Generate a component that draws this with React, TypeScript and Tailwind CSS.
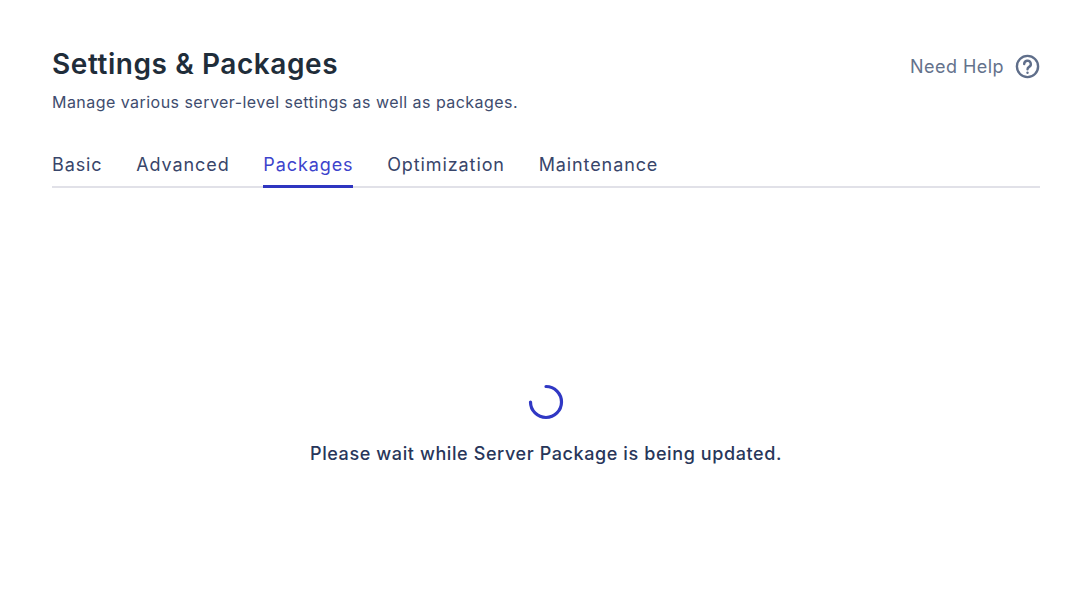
const tabs = ['Basic', 'Advanced', 'Packages', 'Optimization', 'Maintenance'];

export default function App() {
  return (
    <div className="min-h-[602px] bg-white pl-[52px] pr-[32px] pt-[45px] font-['Inter',sans-serif]">
      <div className="flex justify-between">
        <div>
          <h1 className="text-[28px] leading-[38px] font-semibold tracking-[0.57px] text-[#1f2d3a]">Settings &amp; Packages</h1>
          <p className="mt-[8px] text-[16px] leading-[22px] tracking-[0.46px] text-[#3e4c6e]">Manage various server-level settings as well as packages.</p>
        </div>
        <div className="-mt-[1px] flex h-[44px] items-center gap-[11px]">
          <span className="text-[18px] tracking-[0.45px] text-[#64728c]">Need Help</span>
          <svg width="25" height="25" viewBox="0 0 25 25" fill="none" stroke="#5f6e8a" strokeWidth="2.4" strokeLinecap="round">
            <circle cx="12.5" cy="12.5" r="10.6" />
            <path d="M9.2 10a3.3 3.3 0 1 1 4.9 2.9c-1 .6-1.6 1.2-1.6 2.3" />
            <path d="M12.5 18.6v.1" />
          </svg>
        </div>
      </div>

      <div className="mt-[36px] flex gap-[33.75px] border-b-2 border-[#e1e1e8]">
        {tabs.map((tab) => (
          <div
            key={tab}
            className={
              tab === 'Packages'
                ? "-mb-[2px] h-[39px] border-b-[3px] border-[#2f35c0] pt-[3px] text-[18px] leading-[26px] tracking-[0.9px] text-[#3d43cc]"
                : "h-[37px] pt-[3px] text-[18px] leading-[26px] tracking-[0.9px] text-[#38456a]"
            }
          >
            {tab}
          </div>
        ))}
      </div>

      <div className="flex flex-col items-center pt-[196px]">
        <svg width="36" height="36" viewBox="0 0 36 36" fill="none" stroke="#3038c4" strokeWidth="3.2" strokeLinecap="round">
          <path d="M18 2.5A15.5 15.5 0 1 1 2.5 18" />
        </svg>
        <p className="mt-[21px] text-[18px] leading-[26px] font-medium tracking-[0.6px] text-[#28365a]">Please wait while Server Package is being updated.</p>
      </div>
    </div>
  );
}
